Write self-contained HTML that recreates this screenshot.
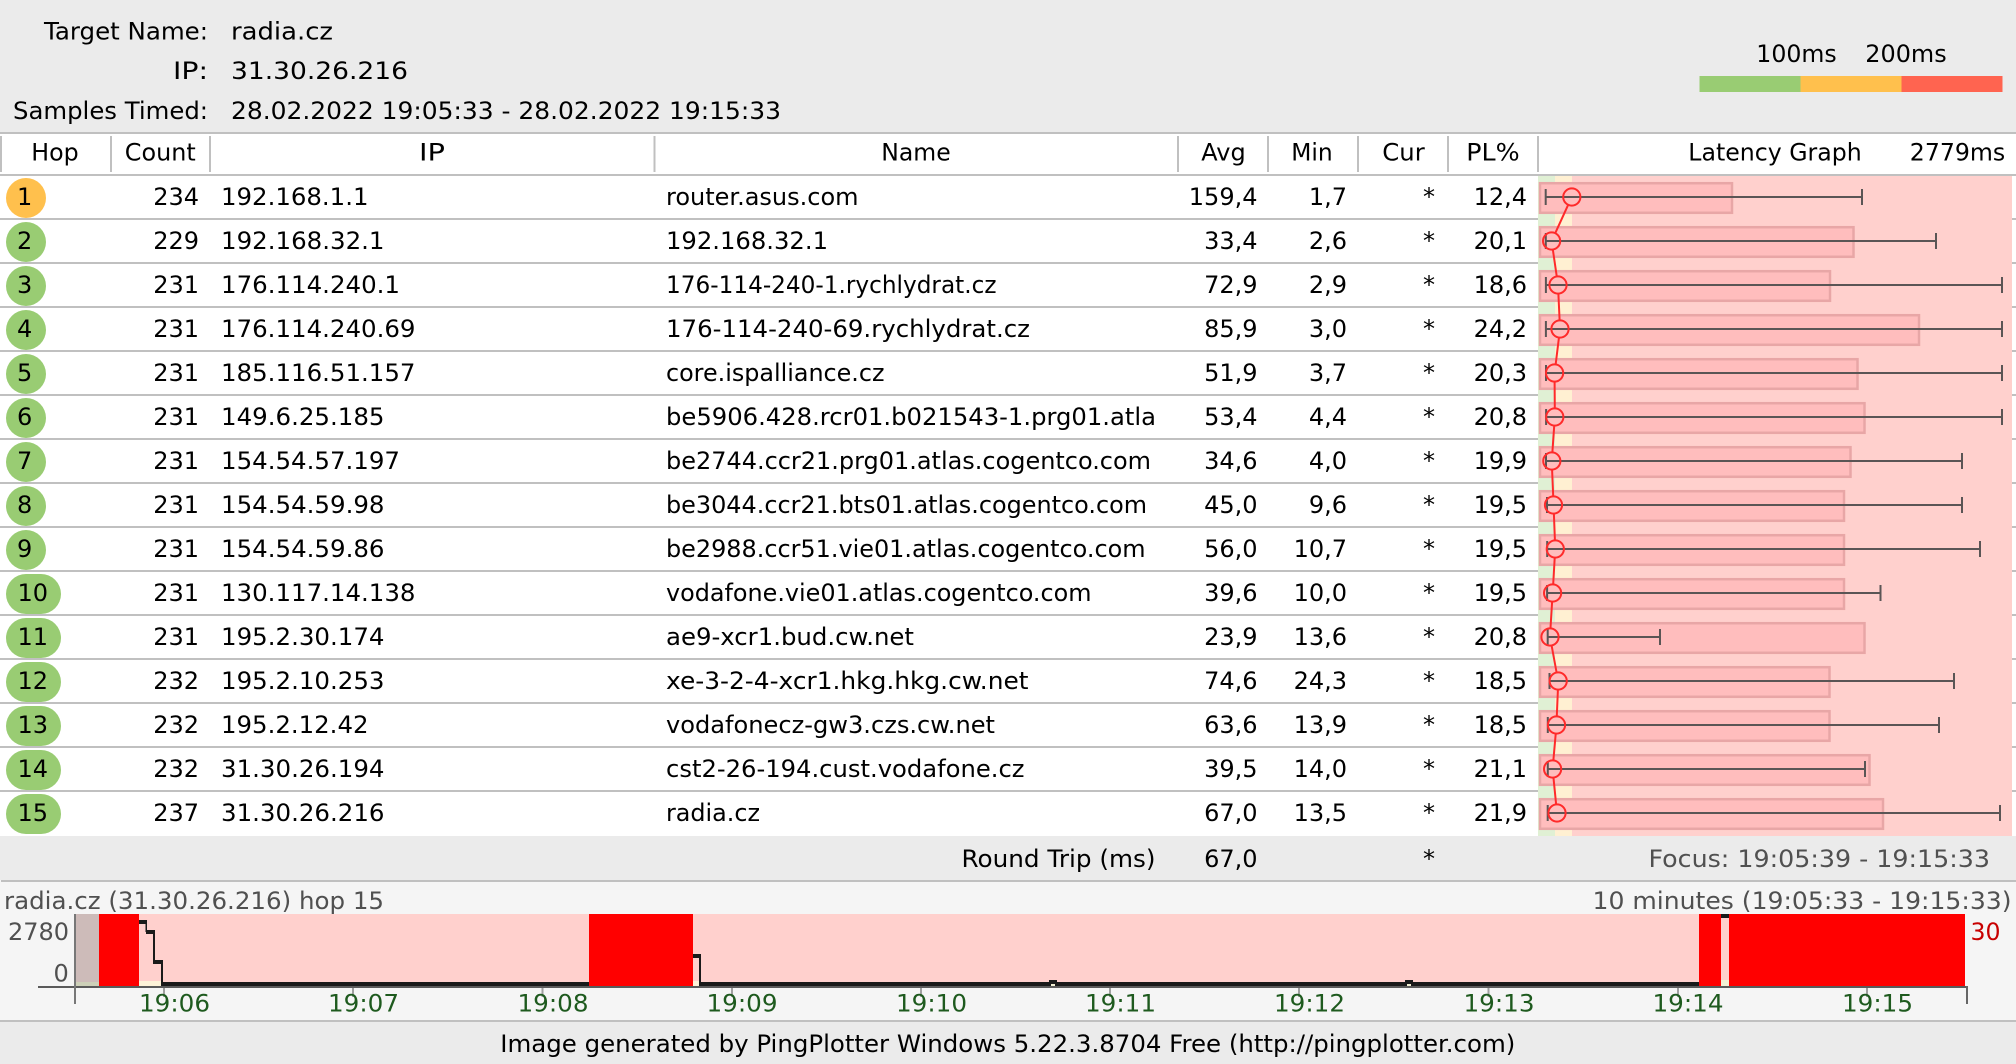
<!DOCTYPE html>
<html lang="en"><head><meta charset="utf-8"><title>PingPlotter</title>
<style>
html,body{margin:0;padding:0;background:#ebebeb;width:2016px;height:1064px;overflow:hidden}
svg{display:block}
text{font-family:"DejaVu Sans","Liberation Sans",sans-serif;font-size:24px;fill:#000}
.e{text-anchor:end}.m{text-anchor:middle}
.g{fill:#505050}.t{fill:#1e5a1e}
</style></head><body>
<svg xmlns="http://www.w3.org/2000/svg" width="2016" height="1064" viewBox="0 0 2016 1064">
<rect width="2016" height="1064" fill="#ebebeb"/>
<!-- Header -->
<text x="44" y="39.5" textLength="164" lengthAdjust="spacingAndGlyphs">Target Name:</text>
<text x="231" y="39.5" textLength="102" lengthAdjust="spacingAndGlyphs">radia.cz</text>
<text x="173" y="79" textLength="35" lengthAdjust="spacingAndGlyphs">IP:</text>
<text x="231" y="79" textLength="177" lengthAdjust="spacingAndGlyphs">31.30.26.216</text>
<text x="13" y="119" textLength="195" lengthAdjust="spacingAndGlyphs">Samples Timed:</text>
<text x="231" y="119" textLength="550" lengthAdjust="spacingAndGlyphs">28.02.2022 19:05:33 - 28.02.2022 19:15:33</text>
<text x="1756.3" y="62" textLength="80.4" lengthAdjust="spacingAndGlyphs">100ms</text>
<text x="1865.3" y="62" textLength="81.4" lengthAdjust="spacingAndGlyphs">200ms</text>
<rect x="1699.5" y="76" width="101" height="16" fill="#99cc73"/>
<rect x="1800.5" y="76" width="101" height="16" fill="#ffc04d"/>
<rect x="1901.5" y="76" width="101" height="16" fill="#ff6450"/>
<!-- Table background -->
<rect y="132" width="2016" height="704" fill="#fff"/>
<rect y="132" width="2016" height="2" fill="#c0c0c0"/>
<rect y="174" width="2016" height="2" fill="#c0c0c0"/>
<g fill="#c0c0c0">
<rect x="0" y="136" width="2" height="36"/><rect x="110" y="136" width="2" height="36"/><rect x="209" y="136" width="2" height="36"/><rect x="653.5" y="136" width="2" height="36"/><rect x="1177" y="136" width="2" height="36"/><rect x="1267" y="136" width="2" height="36"/><rect x="1357" y="136" width="2" height="36"/><rect x="1447" y="136" width="2" height="36"/><rect x="1537" y="136" width="2" height="36"/>
<rect y="218" width="2016" height="2"/><rect y="262" width="2016" height="2"/><rect y="306" width="2016" height="2"/><rect y="350" width="2016" height="2"/><rect y="394" width="2016" height="2"/><rect y="438" width="2016" height="2"/><rect y="482" width="2016" height="2"/><rect y="526" width="2016" height="2"/><rect y="570" width="2016" height="2"/><rect y="614" width="2016" height="2"/><rect y="658" width="2016" height="2"/><rect y="702" width="2016" height="2"/><rect y="746" width="2016" height="2"/><rect y="790" width="2016" height="2"/>
</g>
<text x="31.3" y="160.5" textLength="47.4" lengthAdjust="spacingAndGlyphs">Hop</text>
<text x="124.8" y="160.5" textLength="70.9" lengthAdjust="spacingAndGlyphs">Count</text>
<text x="419" y="160.5" textLength="26" lengthAdjust="spacingAndGlyphs">IP</text>
<text x="881.3" y="160.5" textLength="69.4" lengthAdjust="spacingAndGlyphs">Name</text>
<text x="1201.3" y="160.5" textLength="44.4" lengthAdjust="spacingAndGlyphs">Avg</text>
<text x="1291.3" y="160.5" textLength="41.4" lengthAdjust="spacingAndGlyphs">Min</text>
<text x="1382.3" y="160.5" textLength="42.4" lengthAdjust="spacingAndGlyphs">Cur</text>
<text x="1466.3" y="160.5" textLength="53.4" lengthAdjust="spacingAndGlyphs">PL%</text>
<text x="1688.3" y="160.5" textLength="173.4" lengthAdjust="spacingAndGlyphs">Latency Graph</text>
<text x="1909.8" y="160.5" textLength="95.4" lengthAdjust="spacingAndGlyphs">2779ms</text>
<!-- Hop badges -->
<ellipse cx="26" cy="198" rx="20" ry="20" fill="#ffc04d"/>
<g fill="#99cc73">
<circle cx="26" cy="242" r="20"/><circle cx="26" cy="286" r="20"/><circle cx="26" cy="330" r="20"/><circle cx="26" cy="374" r="20"/><circle cx="26" cy="418" r="20"/><circle cx="26" cy="462" r="20"/><circle cx="26" cy="506" r="20"/><circle cx="26" cy="550" r="20"/>
<rect x="6" y="574" width="55" height="40" rx="20"/><rect x="6" y="618" width="55" height="40" rx="20"/><rect x="6" y="662" width="55" height="40" rx="20"/><rect x="6" y="706" width="55" height="40" rx="20"/><rect x="6" y="750" width="55" height="40" rx="20"/><rect x="6" y="794" width="55" height="40" rx="20"/>
</g>
<!-- Rows -->
<text x="17" y="205">1</text><text class="e" x="199" y="205">234</text><text x="221" y="205" textLength="147.5" lengthAdjust="spacingAndGlyphs">192.168.1.1</text><text x="666" y="205" textLength="192.5" lengthAdjust="spacingAndGlyphs">router.asus.com</text><text class="e" x="1257.5" y="205">159,4</text><text class="e" x="1347" y="205">1,7</text><text class="m" x="1429" y="205">*</text><text class="e" x="1527" y="205">12,4</text>
<text x="17" y="249">2</text><text class="e" x="199" y="249">229</text><text x="221" y="249" textLength="163.5" lengthAdjust="spacingAndGlyphs">192.168.32.1</text><text x="666" y="249" textLength="162" lengthAdjust="spacingAndGlyphs">192.168.32.1</text><text class="e" x="1257.5" y="249">33,4</text><text class="e" x="1347" y="249">2,6</text><text class="m" x="1429" y="249">*</text><text class="e" x="1527" y="249">20,1</text>
<text x="17" y="293">3</text><text class="e" x="199" y="293">231</text><text x="221" y="293" textLength="179" lengthAdjust="spacingAndGlyphs">176.114.240.1</text><text x="666" y="293" textLength="330.5" lengthAdjust="spacingAndGlyphs">176-114-240-1.rychlydrat.cz</text><text class="e" x="1257.5" y="293">72,9</text><text class="e" x="1347" y="293">2,9</text><text class="m" x="1429" y="293">*</text><text class="e" x="1527" y="293">18,6</text>
<text x="17" y="337">4</text><text class="e" x="199" y="337">231</text><text x="221" y="337" textLength="194.5" lengthAdjust="spacingAndGlyphs">176.114.240.69</text><text x="666" y="337" textLength="364" lengthAdjust="spacingAndGlyphs">176-114-240-69.rychlydrat.cz</text><text class="e" x="1257.5" y="337">85,9</text><text class="e" x="1347" y="337">3,0</text><text class="m" x="1429" y="337">*</text><text class="e" x="1527" y="337">24,2</text>
<text x="17" y="381">5</text><text class="e" x="199" y="381">231</text><text x="221" y="381" textLength="194.5" lengthAdjust="spacingAndGlyphs">185.116.51.157</text><text x="666" y="381" textLength="218.5" lengthAdjust="spacingAndGlyphs">core.ispalliance.cz</text><text class="e" x="1257.5" y="381">51,9</text><text class="e" x="1347" y="381">3,7</text><text class="m" x="1429" y="381">*</text><text class="e" x="1527" y="381">20,3</text>
<text x="17" y="425">6</text><text class="e" x="199" y="425">231</text><text x="221" y="425" textLength="163.5" lengthAdjust="spacingAndGlyphs">149.6.25.185</text><text x="666" y="425" textLength="490" lengthAdjust="spacingAndGlyphs">be5906.428.rcr01.b021543-1.prg01.atla</text><text class="e" x="1257.5" y="425">53,4</text><text class="e" x="1347" y="425">4,4</text><text class="m" x="1429" y="425">*</text><text class="e" x="1527" y="425">20,8</text>
<text x="17" y="469">7</text><text class="e" x="199" y="469">231</text><text x="221" y="469" textLength="179" lengthAdjust="spacingAndGlyphs">154.54.57.197</text><text x="666" y="469" textLength="485" lengthAdjust="spacingAndGlyphs">be2744.ccr21.prg01.atlas.cogentco.com</text><text class="e" x="1257.5" y="469">34,6</text><text class="e" x="1347" y="469">4,0</text><text class="m" x="1429" y="469">*</text><text class="e" x="1527" y="469">19,9</text>
<text x="17" y="513">8</text><text class="e" x="199" y="513">231</text><text x="221" y="513" textLength="163.5" lengthAdjust="spacingAndGlyphs">154.54.59.98</text><text x="666" y="513" textLength="481" lengthAdjust="spacingAndGlyphs">be3044.ccr21.bts01.atlas.cogentco.com</text><text class="e" x="1257.5" y="513">45,0</text><text class="e" x="1347" y="513">9,6</text><text class="m" x="1429" y="513">*</text><text class="e" x="1527" y="513">19,5</text>
<text x="17" y="557">9</text><text class="e" x="199" y="557">231</text><text x="221" y="557" textLength="163.5" lengthAdjust="spacingAndGlyphs">154.54.59.86</text><text x="666" y="557" textLength="479.5" lengthAdjust="spacingAndGlyphs">be2988.ccr51.vie01.atlas.cogentco.com</text><text class="e" x="1257.5" y="557">56,0</text><text class="e" x="1347" y="557">10,7</text><text class="m" x="1429" y="557">*</text><text class="e" x="1527" y="557">19,5</text>
<text x="17.5" y="601">10</text><text class="e" x="199" y="601">231</text><text x="221" y="601" textLength="194.5" lengthAdjust="spacingAndGlyphs">130.117.14.138</text><text x="666" y="601" textLength="425.5" lengthAdjust="spacingAndGlyphs">vodafone.vie01.atlas.cogentco.com</text><text class="e" x="1257.5" y="601">39,6</text><text class="e" x="1347" y="601">10,0</text><text class="m" x="1429" y="601">*</text><text class="e" x="1527" y="601">19,5</text>
<text x="17.5" y="645">11</text><text class="e" x="199" y="645">231</text><text x="221" y="645" textLength="163.5" lengthAdjust="spacingAndGlyphs">195.2.30.174</text><text x="666" y="645" textLength="248" lengthAdjust="spacingAndGlyphs">ae9-xcr1.bud.cw.net</text><text class="e" x="1257.5" y="645">23,9</text><text class="e" x="1347" y="645">13,6</text><text class="m" x="1429" y="645">*</text><text class="e" x="1527" y="645">20,8</text>
<text x="17.5" y="689">12</text><text class="e" x="199" y="689">232</text><text x="221" y="689" textLength="163.5" lengthAdjust="spacingAndGlyphs">195.2.10.253</text><text x="666" y="689" textLength="362.5" lengthAdjust="spacingAndGlyphs">xe-3-2-4-xcr1.hkg.hkg.cw.net</text><text class="e" x="1257.5" y="689">74,6</text><text class="e" x="1347" y="689">24,3</text><text class="m" x="1429" y="689">*</text><text class="e" x="1527" y="689">18,5</text>
<text x="17.5" y="733">13</text><text class="e" x="199" y="733">232</text><text x="221" y="733" textLength="147.5" lengthAdjust="spacingAndGlyphs">195.2.12.42</text><text x="666" y="733" textLength="329" lengthAdjust="spacingAndGlyphs">vodafonecz-gw3.czs.cw.net</text><text class="e" x="1257.5" y="733">63,6</text><text class="e" x="1347" y="733">13,9</text><text class="m" x="1429" y="733">*</text><text class="e" x="1527" y="733">18,5</text>
<text x="17.5" y="777">14</text><text class="e" x="199" y="777">232</text><text x="221" y="777" textLength="163.5" lengthAdjust="spacingAndGlyphs">31.30.26.194</text><text x="666" y="777" textLength="358.5" lengthAdjust="spacingAndGlyphs">cst2-26-194.cust.vodafone.cz</text><text class="e" x="1257.5" y="777">39,5</text><text class="e" x="1347" y="777">14,0</text><text class="m" x="1429" y="777">*</text><text class="e" x="1527" y="777">21,1</text>
<text x="17.5" y="821">15</text><text class="e" x="199" y="821">237</text><text x="221" y="821" textLength="163.5" lengthAdjust="spacingAndGlyphs">31.30.26.216</text><text x="666" y="821" textLength="94" lengthAdjust="spacingAndGlyphs">radia.cz</text><text class="e" x="1257.5" y="821">67,0</text><text class="e" x="1347" y="821">13,5</text><text class="m" x="1429" y="821">*</text><text class="e" x="1527" y="821">21,9</text>
<!-- Latency graph -->
<rect x="1538" y="176" width="474" height="660" fill="#ffd0cd"/>
<rect x="1538" y="176" width="17" height="660" fill="#e0f0d4"/>
<rect x="1555" y="176" width="17" height="660" fill="#fff0d2"/>
<g fill="#ffbdbd" stroke="#e8a6a6" stroke-width="2.5">
<rect x="1540" y="183.2" width="192" height="29.6"/>
<rect x="1540" y="227.2" width="313.5" height="29.6"/>
<rect x="1540" y="271.2" width="290" height="29.6"/>
<rect x="1540" y="315.2" width="379" height="29.6"/>
<rect x="1540" y="359.2" width="317.5" height="29.6"/>
<rect x="1540" y="403.2" width="324.5" height="29.6"/>
<rect x="1540" y="447.2" width="310.5" height="29.6"/>
<rect x="1540" y="491.2" width="304" height="29.6"/>
<rect x="1540" y="535.2" width="304" height="29.6"/>
<rect x="1540" y="579.2" width="304" height="29.6"/>
<rect x="1540" y="623.2" width="324.5" height="29.6"/>
<rect x="1540" y="667.2" width="289.5" height="29.6"/>
<rect x="1540" y="711.2" width="289.5" height="29.6"/>
<rect x="1540" y="755.2" width="329.5" height="29.6"/>
<rect x="1540" y="799.2" width="343" height="29.6"/>
</g>
<path fill="none" stroke="#5a5555" stroke-width="2" d="M1545.7 197H1862M1545.7 189v16M1862 189v16M1545.8 241H1936M1545.8 233v16M1936 233v16M1545.9 285H2002M1545.9 277v16M2002 277v16M1545.9 329H2002M1545.9 321v16M2002 321v16M1546 373H2002M1546 365v16M2002 365v16M1546.1 417H2002M1546.1 409v16M2002 409v16M1546 461H1962M1546 453v16M1962 453v16M1547 505H1962M1547 497v16M1962 497v16M1547.2 549H1980M1547.2 541v16M1980 541v16M1547.1 593H1880.5M1547.1 585v16M1880.5 585v16M1547.7 637H1660M1547.7 629v16M1660 629v16M1549.5 681H1954M1549.5 673v16M1954 673v16M1547.8 725H1939M1547.8 717v16M1939 717v16M1547.8 769H1865M1547.8 761v16M1865 761v16M1547.7 813H2000M1547.7 805v16M2000 805v16"/>
<g fill="none" stroke="#ff2a2a" stroke-width="2">
<circle cx="1571.8" cy="197" r="8.6"/><circle cx="1551.6" cy="241" r="8.6"/><circle cx="1558" cy="285" r="8.6"/><circle cx="1560" cy="329" r="8.6"/><circle cx="1554.6" cy="373" r="8.6"/><circle cx="1554.8" cy="417" r="8.6"/><circle cx="1551.8" cy="461" r="8.6"/><circle cx="1553.5" cy="505" r="8.6"/><circle cx="1555.3" cy="549" r="8.6"/><circle cx="1552.6" cy="593" r="8.6"/><circle cx="1550" cy="637" r="8.6"/><circle cx="1558.2" cy="681" r="8.6"/><circle cx="1556.5" cy="725" r="8.6"/><circle cx="1552.6" cy="769" r="8.6"/><circle cx="1557" cy="813" r="8.6"/>
<path d="M1568 205.2L1555.4 232.8M1552.9 250L1556.7 276M1558.4 294L1559.6 320M1558.9 338L1555.7 364M1554.6 382L1554.8 408M1554.2 426L1552.4 452M1552.1 470L1553.2 496M1553.9 514L1554.9 540M1554.7 558L1553.2 584M1552.1 602L1550.5 628M1551.7 646L1556.5 672M1557.9 690L1556.8 716M1555.7 734L1553.4 760M1553.5 778L1556.1 804"/>
</g>
<!-- Round trip row -->
<rect y="836" width="2016" height="44" fill="#ebebeb"/>
<text x="961.5" y="867" textLength="194" lengthAdjust="spacingAndGlyphs">Round Trip (ms)</text>
<text class="e" x="1257.5" y="867">67,0</text>
<text class="m" x="1429" y="867">*</text>
<text class="g" x="1648.5" y="867" textLength="341.5" lengthAdjust="spacingAndGlyphs">Focus: 19:05:39 - 19:15:33</text>
<!-- Timeline panel -->
<rect y="880" width="2016" height="142" fill="#f5f5f5"/>
<rect x="1" y="880" width="2015" height="2" fill="#c0c0c0"/>
<rect y="1020" width="2016" height="2" fill="#c0c0c0"/>
<text class="g" x="4" y="909" textLength="380" lengthAdjust="spacingAndGlyphs">radia.cz (31.30.26.216) hop 15</text>
<text class="g" x="1592.5" y="909" textLength="419" lengthAdjust="spacingAndGlyphs">10 minutes (19:05:33 - 19:15:33)</text>
<text class="g" x="8" y="940" textLength="61" lengthAdjust="spacingAndGlyphs">2780</text>
<text class="g" x="53.5" y="981.5">0</text>
<text x="1970.5" y="940" textLength="30" lengthAdjust="spacingAndGlyphs" style="fill:#c80000">30</text>
<rect x="75" y="914" width="1890" height="72" fill="#ffd0cd"/>
<rect x="75" y="914" width="24" height="72" fill="#cdbbb9"/>
<rect x="75" y="982" width="24" height="4" fill="#cdd0b8"/>
<rect x="139" y="981" width="24" height="5" fill="#fdf2d8"/>
<rect x="693" y="981" width="8" height="5" fill="#fdf2d8"/>
<rect x="1721" y="980" width="8" height="6" fill="#f3f0d4"/>
<g fill="#ff0000">
<rect x="99" y="914" width="40" height="72"/>
<rect x="589" y="914" width="104" height="72"/>
<rect x="1699" y="914" width="22" height="72"/>
<rect x="1729" y="914" width="236" height="72"/>
</g>
<g fill="#1a1a1a">
<rect x="1721" y="914" width="8" height="4"/>
<rect x="139" y="920" width="8" height="4"/>
<rect x="145.5" y="920" width="1.5" height="12"/>
<rect x="146" y="930" width="9" height="4"/>
<rect x="153" y="930" width="2" height="34"/>
<rect x="153" y="960" width="10" height="4"/>
<rect x="161" y="960" width="2" height="26"/>
<rect x="161" y="982" width="428" height="4"/>
<rect x="693" y="954" width="8" height="4"/>
<rect x="699" y="954" width="2" height="32"/>
<rect x="699" y="982" width="1000" height="4"/>
<rect x="1049" y="980" width="8" height="4"/>
<rect x="1405" y="980" width="8" height="4"/>
</g>
<rect x="1051" y="984" width="4" height="2" fill="#f3f0d4"/>
<rect x="1407" y="984" width="4" height="2" fill="#f3f0d4"/>
<rect x="38" y="986" width="1930" height="2" fill="#5a5a5a"/>
<rect x="74" y="914" width="2" height="90" fill="#777"/>
<rect x="1966" y="986" width="2" height="18" fill="#666"/>
<g fill="#a0a0a0">
<rect x="163" y="988" width="2" height="9"/><rect x="352" y="988" width="2" height="9"/><rect x="541.5" y="988" width="2" height="9"/><rect x="731" y="988" width="2" height="9"/><rect x="920" y="988" width="2" height="9"/><rect x="1109" y="988" width="2" height="9"/><rect x="1298" y="988" width="2" height="9"/><rect x="1487.5" y="988" width="2" height="9"/><rect x="1677" y="988" width="2" height="9"/><rect x="1866" y="988" width="2" height="9"/>
</g>
<text class="t" x="139" y="1011.5" textLength="71" lengthAdjust="spacingAndGlyphs">19:06</text>
<text class="t" x="328" y="1011.5" textLength="71" lengthAdjust="spacingAndGlyphs">19:07</text>
<text class="t" x="517.5" y="1011.5" textLength="71" lengthAdjust="spacingAndGlyphs">19:08</text>
<text class="t" x="706.5" y="1011.5" textLength="71" lengthAdjust="spacingAndGlyphs">19:09</text>
<text class="t" x="896" y="1011.5" textLength="71" lengthAdjust="spacingAndGlyphs">19:10</text>
<text class="t" x="1085" y="1011.5" textLength="71" lengthAdjust="spacingAndGlyphs">19:11</text>
<text class="t" x="1274" y="1011.5" textLength="71" lengthAdjust="spacingAndGlyphs">19:12</text>
<text class="t" x="1463.5" y="1011.5" textLength="71" lengthAdjust="spacingAndGlyphs">19:13</text>
<text class="t" x="1652.5" y="1011.5" textLength="71" lengthAdjust="spacingAndGlyphs">19:14</text>
<text class="t" x="1842" y="1011.5" textLength="71" lengthAdjust="spacingAndGlyphs">19:15</text>
<!-- Footer -->
<text x="500.3" y="1052" textLength="1015" lengthAdjust="spacingAndGlyphs">Image generated by PingPlotter Windows 5.22.3.8704 Free (http://pingplotter.com)</text>
</svg>
</body></html>
